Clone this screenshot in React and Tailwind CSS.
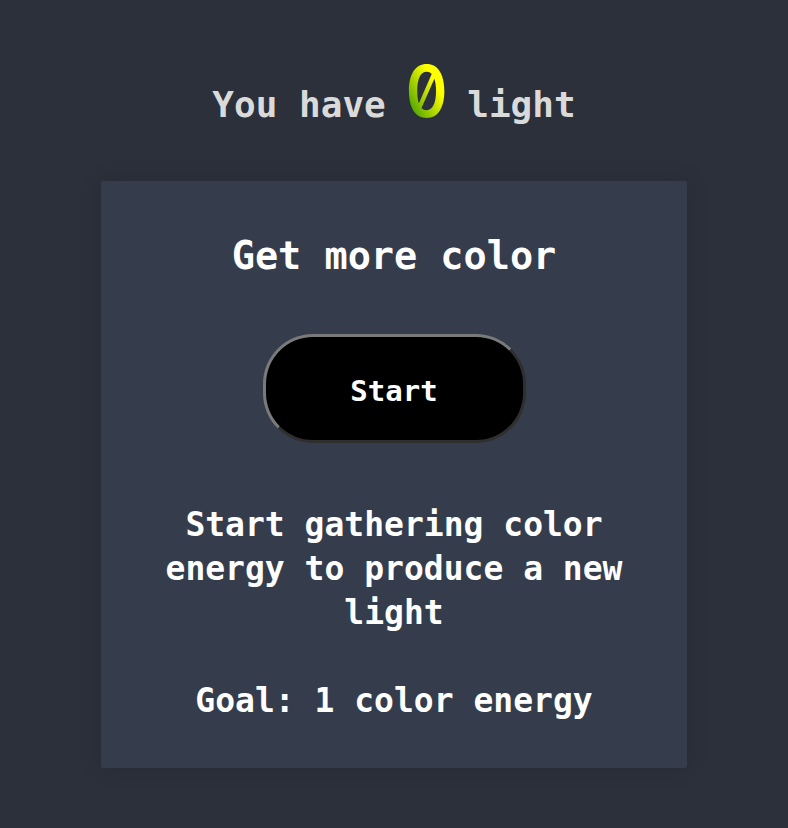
import React from "react";

export default function App() {
  return (
    <div className="min-h-screen bg-[#2b303b] font-['DejaVu_Sans_Mono',monospace] pt-[55px] pb-[60px]">
      <div className="flex h-[73px] items-baseline justify-center text-[36px] leading-none text-[#dadada] font-bold">
        <span>You have</span>
        <span className="ml-[17px] mr-[17px] inline-block scale-x-[0.88] font-['Inter',sans-serif] [font-feature-settings:'zero'] text-[72px] font-semibold leading-none bg-linear-to-tr from-[#38a000] from-15% to-[#ffff00] to-65% bg-clip-text text-transparent">
          0
        </span>
        <span>light</span>
      </div>
      <div className="mx-auto mt-[53px] w-[586px] h-[587px] rounded-[2px] bg-[#353d4c] shadow-[0_0_24px_rgba(0,0,0,0.12)] pt-[52px] flex flex-col items-center text-white font-bold">
        <h1 className="text-[38.5px] leading-[1.2]">Get more color</h1>
        <button className="mt-[55px] w-[263px] h-[109px] rounded-[50px] bg-black border-[3px] border-t-[#7a7a7a] border-l-[#7a7a7a] border-b-[#2f2f2f] border-r-[#2f2f2f] pt-[6px] text-[29px] text-white font-bold">
          Start
        </button>
        <p className="mt-[60px] w-[500px] text-center text-[33px] leading-[44px]">
          Start gathering color energy to produce a new light
          <br />
          <br />
          Goal: 1 color energy
        </p>
      </div>
    </div>
  );
}
